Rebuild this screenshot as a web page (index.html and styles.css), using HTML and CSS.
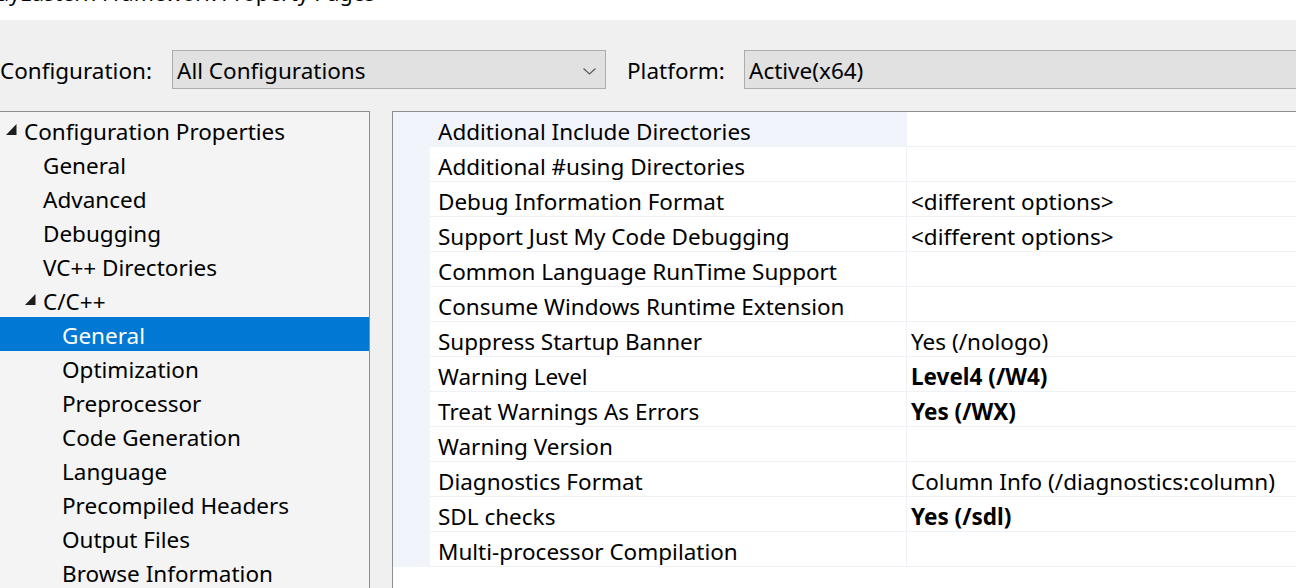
FILE: index.html
```html
<!DOCTYPE html>
<html>
<head>
<meta charset="utf-8">
<link rel="stylesheet" href="styles.css">
</head>
<body>
<div class="window">
  <div class="titlebar"><span class="title">ayEastern Framework Property Pages</span></div>
  <div class="toolbar">
    <span class="label label-config">Configuration:</span>
    <div class="combo combo-config">
      <span class="combo-text">All Configurations</span>
      <svg class="chevron" width="13" height="7" viewBox="0 0 13 7"><path d="M0.5 0.5 L6.5 6 L12.5 0.5" fill="none" stroke="#555" stroke-width="1.1"/></svg>
    </div>
    <span class="label label-platform">Platform:</span>
    <div class="combo combo-platform">
      <span class="combo-text">Active(x64)</span>
    </div>
  </div>
  <div class="main">
    <div class="tree">
      <div class="node lvl0"><span class="toggle"><svg width="11" height="11" viewBox="0 0 11 11"><path d="M10.5 0 L10.5 11 L0 11 Z" fill="#1e1e1e"/></svg></span><span>Configuration Properties</span></div>
      <div class="node lvl1"><span class="toggle"></span><span>General</span></div>
      <div class="node lvl1"><span class="toggle"></span><span>Advanced</span></div>
      <div class="node lvl1"><span class="toggle"></span><span>Debugging</span></div>
      <div class="node lvl1"><span class="toggle"></span><span>VC++ Directories</span></div>
      <div class="node lvl1"><span class="toggle"><svg width="11" height="11" viewBox="0 0 11 11"><path d="M10.5 0 L10.5 11 L0 11 Z" fill="#1e1e1e"/></svg></span><span>C/C++</span></div>
      <div class="node lvl2 selected"><span class="toggle"></span><span>General</span></div>
      <div class="node lvl2"><span class="toggle"></span><span>Optimization</span></div>
      <div class="node lvl2"><span class="toggle"></span><span>Preprocessor</span></div>
      <div class="node lvl2"><span class="toggle"></span><span>Code Generation</span></div>
      <div class="node lvl2"><span class="toggle"></span><span>Language</span></div>
      <div class="node lvl2"><span class="toggle"></span><span>Precompiled Headers</span></div>
      <div class="node lvl2"><span class="toggle"></span><span>Output Files</span></div>
      <div class="node lvl2"><span class="toggle"></span><span>Browse Information</span></div>
    </div>
    <div class="grid">
      <div class="row active"><span class="gutter"></span><span class="name">Additional Include Directories</span><span class="value"></span></div>
      <div class="row"><span class="gutter"></span><span class="name">Additional #using Directories</span><span class="value"></span></div>
      <div class="row"><span class="gutter"></span><span class="name">Debug Information Format</span><span class="value">&lt;different options&gt;</span></div>
      <div class="row"><span class="gutter"></span><span class="name">Support Just My Code Debugging</span><span class="value">&lt;different options&gt;</span></div>
      <div class="row"><span class="gutter"></span><span class="name">Common Language RunTime Support</span><span class="value"></span></div>
      <div class="row"><span class="gutter"></span><span class="name">Consume Windows Runtime Extension</span><span class="value"></span></div>
      <div class="row"><span class="gutter"></span><span class="name">Suppress Startup Banner</span><span class="value">Yes (/nologo)</span></div>
      <div class="row"><span class="gutter"></span><span class="name">Warning Level</span><span class="value bold">Level4 (/W4)</span></div>
      <div class="row"><span class="gutter"></span><span class="name">Treat Warnings As Errors</span><span class="value bold">Yes (/WX)</span></div>
      <div class="row"><span class="gutter"></span><span class="name">Warning Version</span><span class="value"></span></div>
      <div class="row"><span class="gutter"></span><span class="name">Diagnostics Format</span><span class="value">Column Info (/diagnostics:column)</span></div>
      <div class="row"><span class="gutter"></span><span class="name">SDL checks</span><span class="value bold">Yes (/sdl)</span></div>
      <div class="row"><span class="gutter"></span><span class="name">Multi-processor Compilation</span><span class="value"></span></div>
    </div>
  </div>
</div>
</body>
</html>
```

FILE: styles.css
```css
html, body {
  margin: 0;
  padding: 0;
}
body {
  width: 1296px;
  height: 588px;
  overflow: hidden;
  background: #f0f0f0;
  font-family: "Noto Sans", "Open Sans", sans-serif;
  font-size: 22.5px;
  color: #000;
}
.window {
  display: flex;
  flex-direction: column;
  height: 588px;
}
.titlebar {
  height: 20px;
  background: #fff;
  overflow: hidden;
  white-space: nowrap;
}
.title {
  display: block;
  font-size: 21.5px;
  line-height: 30px;
  margin-top: -22px;
  margin-left: -3px;
  color: #000;
}
.toolbar {
  display: flex;
  height: 91px;
  padding-top: 30px;
  box-sizing: border-box;
  align-items: flex-start;
  white-space: nowrap;
}
.label {
  height: 39px;
  line-height: 41px;
  flex: none;
}
.label-config {
  width: 172px;
}
.label-platform {
  margin-left: 21px;
  width: 117px;
}
.combo {
  flex: none;
  height: 39px;
  box-sizing: border-box;
  border: 1px solid #adadad;
  background: #e1e1e1;
  display: flex;
  align-items: center;
  padding-left: 4px;
  line-height: 37px;
}
.combo-text {
  padding-top: 2px;
}
.combo-config {
  width: 434px;
  justify-content: space-between;
  padding-right: 9px;
}
.combo-platform {
  width: 600px;
}
.chevron {
  display: block;
  margin-top: 3px;
}
.main {
  display: flex;
  gap: 22px;
  flex: 1;
  min-height: 0;
}
.tree {
  width: 370px;
  flex: none;
  box-sizing: border-box;
  background: #f4f4f4;
  border-top: 1px solid #8e8e8e;
  border-right: 1px solid #8e8e8e;
  padding-top: 1px;
  white-space: nowrap;
}
.node {
  display: flex;
  align-items: center;
  height: 34px;
  line-height: 34px;
  color: #000;
}
.node.lvl0 { padding-left: 5px; }
.node.lvl1 { padding-left: 24px; }
.node.lvl2 { padding-left: 43px; }
.toggle {
  width: 19px;
  flex: none;
  display: flex;
  align-items: center;
  padding-left: 1px;
  box-sizing: border-box;
  margin-top: -2px;
}
.toggle svg {
  display: block;
}
.node span:last-child {
  padding-top: 3px;
}
.node.selected {
  background: #0078d4;
  color: #fff;
}
.grid {
  flex: 1;
  background: #fff;
  border-top: 1px solid #8e8e8e;
  border-left: 1px solid #8e8e8e;
  white-space: nowrap;
}
.row {
  display: grid;
  grid-template-columns: 37px 476px 1fr;
  height: 35px;
}
.gutter {
  background: #f1f5fb;
}
.name, .value {
  box-sizing: border-box;
  border-bottom: 1px solid #eef1f6;
  line-height: 33px;
  padding-top: 3px;
  overflow: hidden;
}
.name {
  padding-left: 8px;
}
.value {
  border-left: 1px solid #eef1f6;
  padding-left: 4px;
}
.row.active .name {
  background: #f1f5fb;
}
.bold {
  font-weight: 700;
}
```
